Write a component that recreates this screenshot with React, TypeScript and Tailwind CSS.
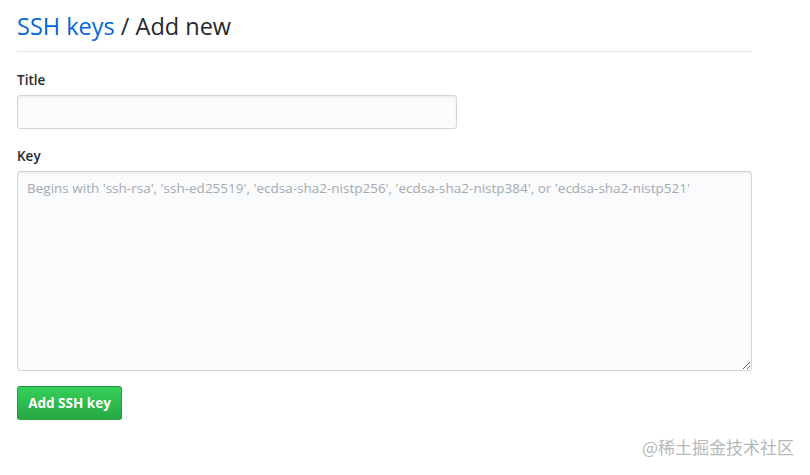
import React from "react";

export default function App() {
  return (
    <div
      className="w-[810px] h-[475px] bg-white relative overflow-hidden"
      style={{ fontFamily: '"Open Sans", "Noto Sans", "Liberation Sans", sans-serif' }}
    >
      <div className="pl-[17px] w-[752px]">
        <div className="pt-[11px] pb-[10px] border-b border-[#e1e4e8]">
          <h1 className="text-[23.5px] leading-[30px] font-normal text-[#24292e]">
            <span className="text-[#0366d6]">SSH keys</span> / Add new
          </h1>
        </div>
        <div className="mt-[19px]">
          <label className="block text-[13.5px] font-semibold text-[#24292e] leading-[18px]">Title</label>
          <input
            className="mt-[6px] block w-[440px] h-[34px] rounded-[3px] border border-[#d1d5da] bg-[#fafbfc] shadow-[inset_0_1px_2px_rgba(27,31,35,0.075)] outline-none"
          />
        </div>
        <div className="mt-[18px]">
          <label className="block text-[13.5px] font-semibold text-[#24292e] leading-[18px]">Key</label>
          <textarea
            placeholder="Begins with 'ssh-rsa', 'ssh-ed25519', 'ecdsa-sha2-nistp256', 'ecdsa-sha2-nistp384', or 'ecdsa-sha2-nistp521'"
            className="mt-[6px] block w-[735px] h-[200px] rounded-[3px] border border-[#d1d5da] bg-[#fafbfc] shadow-[inset_0_1px_2px_rgba(27,31,35,0.075)] outline-none px-[9px] py-[6px] text-[13.5px] leading-[20px] text-[#24292e] placeholder:text-[#a3aab1]"
          />
        </div>
        <button
          className="mt-[15px] h-[34px] w-[105px] rounded-[3px] border border-[rgba(27,31,35,0.2)] text-white text-[13.5px] font-bold bg-gradient-to-b from-[#34d058] to-[#28a745]"
        >
          Add SSH key
        </button>
      </div>
      <div
        className="absolute left-[642px] top-[437px] text-[17px] text-[#b5b8bc] leading-[20px]"
        style={{ fontFamily: '"Noto Sans CJK SC", "Noto Sans", sans-serif' }}
      >
        @稀土掘金技术社区
      </div>
    </div>
  );
}
